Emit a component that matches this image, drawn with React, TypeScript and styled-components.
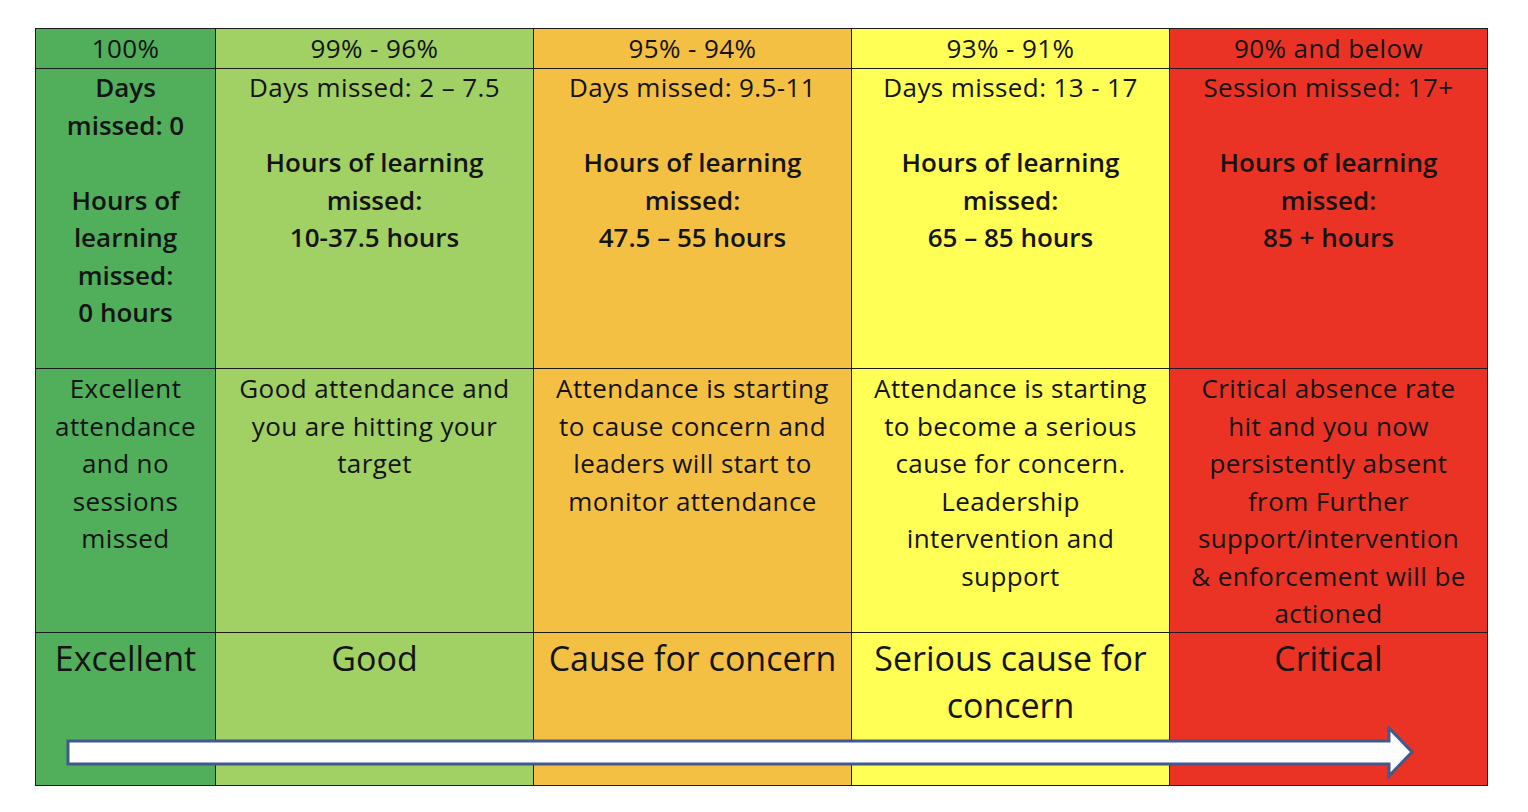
import React from "react";
import styled, { createGlobalStyle } from "styled-components";

const Global = createGlobalStyle`
  html, body { margin: 0; padding: 0; background: #ffffff; }
  body { font-family: "Open Sans", "Noto Sans", sans-serif; color: #111; }
`;

const Page = styled.div`
  padding: 28px 0 0 35px;
`;

const Board = styled.div`
  position: relative;
  display: grid;
  grid-template-columns: 179px repeat(4, 317px);
  grid-template-rows: 39px 299px 263px 152px;
  gap: 1px;
  padding: 1px;
  background: #1c1c1c;
  width: max-content;
`;

const Cell = styled.div<{ $bg: string; $kind: "head" | "info" | "desc" | "label" }>`
  background: ${(p) => p.$bg};
  text-align: center;
  color: #141414;
  font-size: ${(p) => (p.$kind === "label" ? "34px" : "26px")};
  line-height: ${(p) => (p.$kind === "label" ? "47px" : p.$kind === "head" ? "39px" : "37.5px")};
  font-weight: 400;
  padding-top: ${(p) => (p.$kind === "label" ? "2px" : p.$kind === "desc" ? "1px" : "0")};
  letter-spacing: ${(p) => (p.$kind === "label" ? "0" : "0.4px")};
  white-space: nowrap;
`;

const Strong = styled.span`
  font-weight: 600;
  letter-spacing: 0;
`;

const Arrow = styled.svg`
  position: absolute;
  left: 31px;
  top: 698px;
`;

type Col = {
  bg: string;
  head: string;
  days: string[];
  boldDays?: boolean;
  hours: string[];
  desc: string[];
  label: string[];
};

const cols: Col[] = [
  {
    bg: "#51AE5B",
    head: "100%",
    days: ["Days", "missed: 0"],
    boldDays: true,
    hours: ["Hours of", "learning", "missed:", "0 hours"],
    desc: ["Excellent", "attendance", "and no", "sessions", "missed"],
    label: ["Excellent"],
  },
  {
    bg: "#A1D064",
    head: "99% - 96%",
    days: ["Days missed: 2 – 7.5"],
    hours: ["Hours of learning", "missed:", "10-37.5 hours"],
    desc: ["Good attendance and", "you are hitting your", "target"],
    label: ["Good"],
  },
  {
    bg: "#F4C043",
    head: "95% - 94%",
    days: ["Days missed: 9.5-11"],
    hours: ["Hours of learning", "missed:", "47.5 – 55 hours"],
    desc: ["Attendance is starting", "to cause concern and", "leaders will start to", "monitor attendance"],
    label: ["Cause for concern"],
  },
  {
    bg: "#FFFF55",
    head: "93% - 91%",
    days: ["Days missed: 13 - 17"],
    hours: ["Hours of learning", "missed:", "65 – 85 hours"],
    desc: ["Attendance is starting", "to become a serious", "cause for concern.", "Leadership", "intervention and", "support"],
    label: ["Serious cause for", "concern"],
  },
  {
    bg: "#EA3324",
    head: "90% and below",
    days: ["Session missed: 17+"],
    hours: ["Hours of learning", "missed:", "85 + hours"],
    desc: [
      "Critical absence rate",
      "hit and you now",
      "persistently absent",
      "from Further",
      "support/intervention",
      "& enforcement will be",
      "actioned",
    ],
    label: ["Critical"],
  },
];

const Lines = ({ lines }: { lines: string[] }) => (
  <>
    {lines.map((l, i) => (
      <React.Fragment key={i}>
        {i > 0 && <br />}
        {l}
      </React.Fragment>
    ))}
  </>
);

export default function App() {
  return (
    <Page>
      <Global />
      <Board>
        {cols.map((c) => (
          <Cell key={"h" + c.head} $bg={c.bg} $kind="head">
            {c.head}
          </Cell>
        ))}
        {cols.map((c) => (
          <Cell key={"i" + c.head} $bg={c.bg} $kind="info">
            {c.boldDays ? (
              <Strong>
                <Lines lines={c.days} />
              </Strong>
            ) : (
              <Lines lines={c.days} />
            )}
            <br />
            <br />
            <Strong>
              <Lines lines={c.hours} />
            </Strong>
          </Cell>
        ))}
        {cols.map((c) => (
          <Cell key={"d" + c.head} $bg={c.bg} $kind="desc">
            <Lines lines={c.desc} />
          </Cell>
        ))}
        {cols.map((c) => (
          <Cell key={"l" + c.head} $bg={c.bg} $kind="label">
            <Lines lines={c.label} />
          </Cell>
        ))}
        <Arrow width="1352" height="54" viewBox="0 0 1352 54">
          <polygon
            points="2,15 1323,15 1323,2 1346,26 1323,50 1323,38 2,38"
            fill="#ffffff"
            stroke="#41598F"
            strokeWidth="3"
            strokeLinejoin="miter"
          />
        </Arrow>
      </Board>
    </Page>
  );
}
